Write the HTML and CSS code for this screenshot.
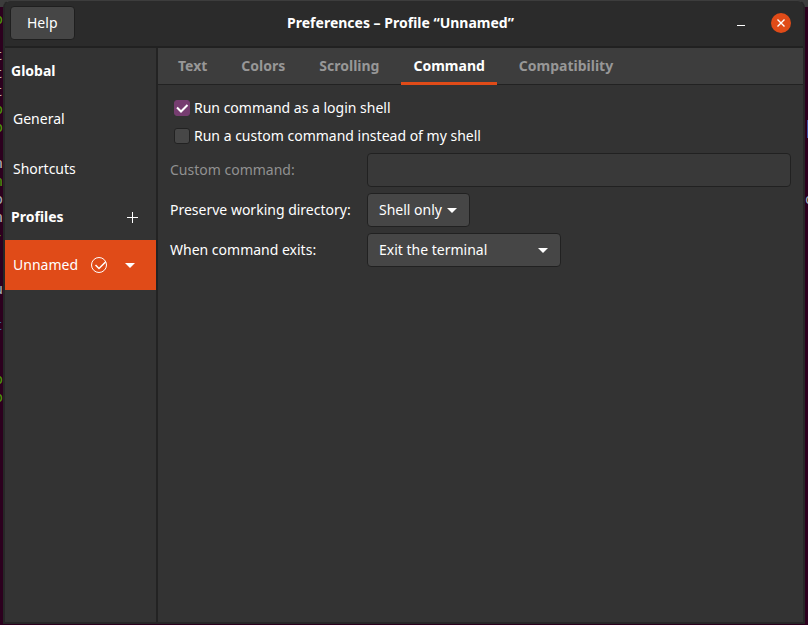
FILE: index.html
```html
<!DOCTYPE html>
<html lang="en">
<head>
<meta charset="utf-8">
<title>Preferences – Profile “Unnamed”</title>
<link rel="stylesheet" href="styles.css">
</head>
<body>
<div class="desktop">
  <div class="terminal terminal-left" aria-hidden="true">
    <span class="green">o</span><span></span><span>t</span><span>t</span><span>t</span><span class="green">o</span><span class="green">o</span><span></span><span>n</span><span class="green">n</span><span class="pale">o</span><span>n</span><span class="green">-</span><span></span><span></span><span class="pale">u</span><span></span><span class="blue">t</span><span></span><span></span><span class="green">o</span><span class="green">o</span>
  </div>

  <div class="window">
    <header class="titlebar">
      <button class="button" type="button">Help</button>
      <h1 class="title">Preferences – Profile “Unnamed”</h1>
      <div class="window-controls">
        <button class="minimize" type="button" aria-label="Minimize"><svg width="8" height="16" viewBox="0 0 8 16"><path d="M0 10.5h8" stroke="#fff"/></svg></button>
        <button class="close" type="button" aria-label="Close"><svg width="8" height="8" viewBox="0 0 8 8"><path d="M.5.5l7 7M7.500.5l-7 7" stroke="#fff" stroke-width="1.400"/></svg></button>
      </div>
    </header>

    <div class="body">
      <nav class="sidebar">
        <h2 class="section">Global</h2>
        <a class="item" href="#general">General</a>
        <a class="item" href="#shortcuts">Shortcuts</a>
        <div class="section-row">
          <h2 class="section">Profiles</h2>
          <button class="icon-button" type="button" aria-label="Add profile"><svg width="11" height="11" viewBox="0 0 11 11"><path d="M5.500 0v11M0 5.500h11" stroke="#fff"/></svg></button>
        </div>
        <div class="item selected">
          <a class="profile" href="#unnamed">Unnamed</a>
          <svg width="16" height="16" viewBox="0 0 16 16" fill="none" stroke="#fff"><circle cx="8" cy="8" r="7.500"/><path d="M4.500 8l3.500 3.500 6.500-6.500" stroke-width="1.500"/></svg>
          <button class="icon-button" type="button" aria-label="Profile menu"><svg width="10" height="5" viewBox="0 0 10 5"><path d="M0 0h10L5 5z" fill="#fff"/></svg></button>
        </div>
      </nav>

      <main class="content">
        <div class="tabs" role="tablist">
          <button class="tab" role="tab" type="button">Text</button>
          <button class="tab" role="tab" type="button">Colors</button>
          <button class="tab" role="tab" type="button">Scrolling</button>
          <button class="tab active" role="tab" type="button" aria-selected="true">Command</button>
          <button class="tab" role="tab" type="button">Compatibility</button>
        </div>

        <form class="panel">
          <div class="check-row">
            <span class="check"><input type="checkbox" id="login" checked><svg class="tick" viewBox="0 0 16 16" fill="none" stroke="#fff" stroke-width="2"><path d="M3 7.500l4 4L13.500 5"/></svg></span>
            <label for="login">Run command as a login shell</label>
          </div>
          <div class="check-row">
            <span class="check"><input type="checkbox" id="custom"><svg class="tick" viewBox="0 0 16 16" fill="none" stroke="#fff" stroke-width="2"><path d="M3 7.500l4 4L13.500 5"/></svg></span>
            <label for="custom">Run a custom command instead of my shell</label>
          </div>
          <div class="fields">
            <label class="disabled" for="command">Custom command:</label>
            <input class="entry" type="text" id="command" disabled>
            <label for="directory">Preserve working directory:</label>
            <span class="combo combo-narrow"><select id="directory"><option>Shell only</option></select><svg class="arrow" width="10" height="5" viewBox="0 0 10 5"><path d="M0 0h10L5 5z" fill="#fff"/></svg></span>
            <label for="exits">When command exits:</label>
            <span class="combo combo-wide"><select id="exits"><option>Exit the terminal</option></select><svg class="arrow" width="10" height="5" viewBox="0 0 10 5"><path d="M0 0h10L5 5z" fill="#fff"/></svg></span>
          </div>
        </form>
      </main>
    </div>
  </div>

  <div class="terminal terminal-right" aria-hidden="true">
    <span></span><span></span><span></span><span></span><span></span><span></span><span class="cursor"></span><span></span><span></span><span></span><span class="pale">c</span>
  </div>
</div>
</body>
</html>
```
FILE: styles.css
```css
* { box-sizing: border-box; }

body {
  margin: 0;
  color: #fff;
  font: 14px/20px "Noto Sans", sans-serif;
}

h1, h2 { margin: 0; font-size: 14px; line-height: 20px; }

button, input, select { font: inherit; color: inherit; margin: 0; }

a { color: inherit; text-decoration: none; }

svg { display: block; }

.desktop {
  display: grid;
  grid-template-columns: 3px minmax(0, 1fr) 3px;
  height: 100vh;
  padding-bottom: 1px;
  background: linear-gradient(#3c3c3c 7px, #2c001e 7px);
}

.terminal {
  display: flex;
  flex-direction: column;
  min-width: 0;
  padding-top: 12px;
  overflow: hidden;
  color: #b9b5b8;
  font: 15px/18px "Liberation Mono", monospace;
}

.terminal span { flex: none; height: 18px; }
.terminal-left { align-items: flex-end; }
.terminal-right { align-items: flex-start; }
.terminal .green { color: #4e9a06; }
.terminal .pale { color: #a3b0b8; }
.terminal .blue { color: #3465a4; }
.terminal .cursor { width: 1px; height: 18px; margin-left: 2px; background: #3f51a3; }

.window {
  display: flex;
  flex-direction: column;
  min-width: 0;
  border: 2px solid #262626;
  border-top: 1px solid #3d3d3d;
  border-radius: 8px 8px 0 0;
  background: #333;
}

.titlebar {
  display: grid;
  grid-template-columns: 1fr auto 1fr;
  align-items: center;
  height: 47px;
  padding: 0 12px 1px 5px;
  border-bottom: 2px solid #212121;
  border-radius: 6px 6px 0 0;
  background: #2b2b2b;
}

.button {
  justify-self: start;
  height: 34px;
  padding: 0 16px;
  border: 1px solid #1f1f1f;
  border-radius: 4px;
  background: #464646;
}

.window-controls {
  display: flex;
  justify-self: end;
  align-items: center;
  gap: 18px;
}

.minimize, .close, .icon-button {
  display: grid;
  place-items: center;
  height: 20px;
  padding: 0;
  border: 0;
  background: none;
}

.minimize { width: 24px; }
.close { width: 20px; border-radius: 50%; background: #e04b18; }

.body { display: flex; flex: 1; min-height: 0; }

.sidebar {
  display: flex;
  flex: none;
  flex-direction: column;
  width: 153px;
  border-right: 2px solid #232323;
}

.section { padding: 13px 6px; }

.section-row {
  display: flex;
  align-items: center;
  justify-content: space-between;
  height: 46px;
  padding-right: 14px;
}

.icon-button { width: 20px; }

.item {
  display: flex;
  align-items: center;
  height: 50px;
  padding: 0 8px;
}

.selected { gap: 13px; padding-right: 16px; background: #e04b18; }

.content { flex: 1; min-width: 0; }

.tabs {
  display: flex;
  gap: 10px;
  height: 37px;
  padding: 0 8px;
  border-bottom: 1px solid #222;
  background: #3d3d3d;
}

.tab {
  height: 37px;
  padding: 2px 12px 0;
  border: 0;
  border-bottom: 3px solid transparent;
  background: none;
  color: #979797;
  font-weight: 700;
}

.active { border-bottom-color: #e04b18; color: #fff; }

.panel { padding: 12px; }

.check-row {
  display: flex;
  align-items: center;
  gap: 4px;
  height: 22px;
  margin-bottom: 6px;
  padding-left: 4px;
}

.check { display: grid; width: 16px; height: 16px; }
.check > * { grid-area: 1 / 1; }

.check input {
  appearance: none;
  width: 16px;
  height: 16px;
  border: 1px solid #222;
  border-radius: 3px;
  background: #474747;
}

.check input:checked { border-color: #763d70; background: #763d70; }
.tick { width: 16px; height: 16px; visibility: hidden; pointer-events: none; }
.check input:checked + .tick { visibility: visible; }

.fields {
  display: grid;
  grid-template-columns: 185px minmax(0, 1fr);
  gap: 6px 12px;
  align-items: center;
  white-space: nowrap;
}

.disabled { color: #919191; }

.entry, .combo select {
  width: 100%;
  height: 34px;
  padding: 0 11px;
  border: 1px solid #212121;
  border-radius: 4px;
  background: #464646;
}

.entry { background: #393939; }

.combo { display: grid; align-items: center; }
.combo > * { grid-area: 1 / 1; }
.combo select { appearance: none; }
.combo-narrow { width: 103px; }
.combo-wide { width: 194px; }
.arrow { justify-self: end; margin-right: 13px; pointer-events: none; }
```
